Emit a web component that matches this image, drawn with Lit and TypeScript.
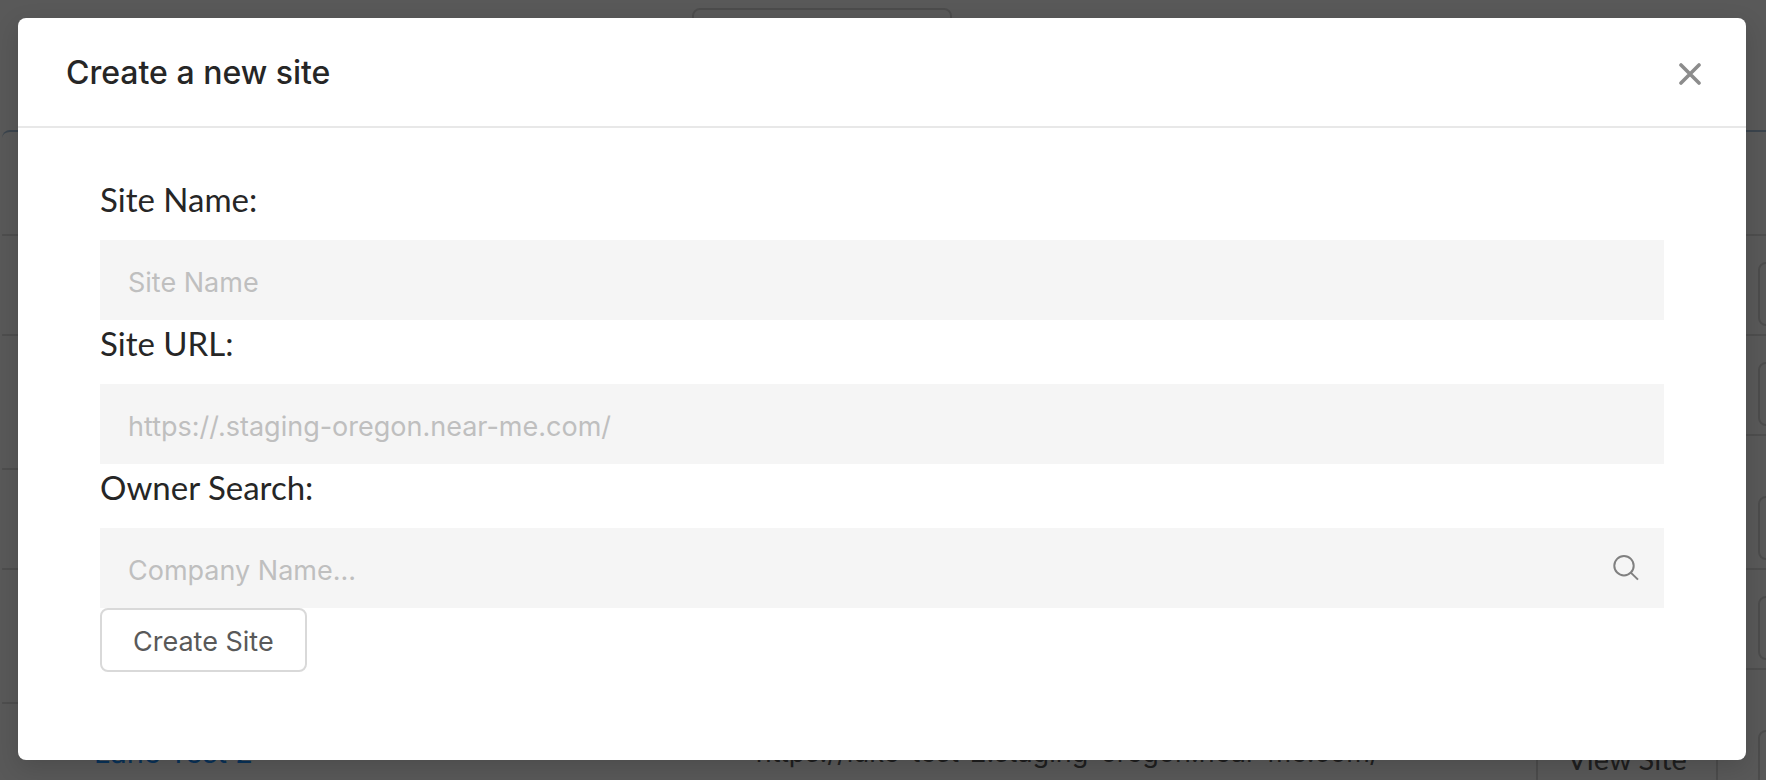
import { LitElement, html, css } from "lit";
import { customElement, state } from "lit/decorators.js";

@customElement("site-list")
class SiteList extends LitElement {
  static styles = css`
    :host {
      display: block;
      height: 100%;
      overflow: hidden;
      background: #ffffff;
      color: #595959;
      font: 27px/40px Inter, "Liberation Sans", sans-serif;
    }
    .toolbar {
      box-sizing: border-box;
      height: 130px;
      padding-top: 8px;
      display: flex;
      justify-content: center;
    }
    .filter {
      box-sizing: border-box;
      width: 260px;
      height: 64px;
      margin-right: 122px;
      border: 2px solid #d9d9d9;
      border-radius: 8px;
    }
    .tables {
      display: flex;
      margin-left: 2px;
      border-top: 2px solid #a8c4dc;
      border-top-left-radius: 8px;
    }
    .main {
      flex: 1;
      min-width: 0;
    }
    .row {
      box-sizing: border-box;
      height: 100px;
      border-bottom: 2px solid #e0e0e0;
      display: flex;
      align-items: center;
    }
    .tall {
      height: 134px;
    }
    .head {
      height: 104px;
    }
    .name {
      flex: 0 0 42%;
      box-sizing: border-box;
      padding-left: 92px;
      font-size: 29px;
    }
    .name a {
      color: #1890ff;
      text-decoration: none;
    }
    .url {
      flex: 1;
      padding-left: 28px;
    }
    .view {
      box-sizing: border-box;
      width: 182px;
      height: 100px;
      margin-right: 12px;
      padding-top: 12px;
      border: 2px solid #d9d9d9;
      border-width: 0 2px;
      background: none;
      color: #595959;
      font: 29px/40px Lato, "Liberation Sans", sans-serif;
    }
    .actions {
      flex: 0 0 36px;
      overflow: hidden;
    }
    .actions .row {
      align-items: flex-end;
      padding: 0 0 8px 28px;
    }
    .more {
      box-sizing: border-box;
      flex: 0 0 64px;
      height: 64px;
      border: 2px solid #d9d9d9;
      border-radius: 8px;
      background: none;
    }
  `;

  render() {
    return html`
      <div class="toolbar"><div class="filter"></div></div>
      <div class="tables">
        <div class="main">
          <div class="row head"></div>
          <div class="row"></div>
          <div class="row tall"></div>
          <div class="row"></div>
          <div class="row tall"></div>
          <div class="row">
            <div class="name"><a href="#">Lane Test 2</a></div>
            <div class="url">https://luke-test-2.staging-oregon.near-me.com/</div>
            <button class="view">View Site</button>
          </div>
        </div>
        <div class="actions">
          <div class="row head"></div>
          ${["", "", "tall", "", "tall"].map(
            (size) => html`<div class="row ${size}">
              <button class="more" aria-label="More"></button>
            </div>`
          )}
        </div>
      </div>
    `;
  }
}

@customElement("app-root")
class AppRoot extends LitElement {
  @state() private open = true;

  static styles = css`
    :host {
      display: block;
      position: relative;
      height: 100vh;
      overflow: hidden;
    }
    .mask {
      position: absolute;
      inset: 0;
      box-sizing: border-box;
      padding: 18px 20px 20px 18px;
      background: rgba(0, 0, 0, 0.65);
    }
    .modal {
      background: #ffffff;
      border-radius: 8px;
      box-shadow: 0 8px 24px rgba(0, 0, 0, 0.15);
      color: #262626;
    }
    .header {
      display: flex;
      align-items: center;
      justify-content: space-between;
      padding: 33px 44px 31px 48px;
      border-bottom: 2px solid #e8e8e8;
    }
    .title {
      margin: 0;
      font: 500 32px/44px Inter, "Liberation Sans", sans-serif;
    }
    .close {
      display: flex;
      padding: 0;
      border: 0;
      background: none;
      cursor: pointer;
    }
    .body {
      display: flex;
      flex-direction: column;
      align-items: stretch;
      padding: 48px 82px 88px;
    }
    .label {
      padding-bottom: 18px;
      font: 33px/46px Lato, "Liberation Sans", sans-serif;
    }
    .field {
      display: flex;
      align-items: center;
      height: 80px;
      background: #f5f5f5;
    }
    .input {
      flex: 1;
      min-width: 0;
      box-sizing: border-box;
      height: 100%;
      padding: 4px 28px 0;
      border: 0;
      outline: 0;
      background: none;
      color: #595959;
      font: 27px/40px Inter, "Liberation Sans", sans-serif;
    }
    .input::placeholder {
      color: #bfbfbf;
      opacity: 1;
    }
    .search {
      display: flex;
      padding: 0 24px 0 0;
      border: 0;
      background: none;
    }
    .submit {
      align-self: flex-start;
      box-sizing: border-box;
      height: 64px;
      padding: 4px 31px 0;
      border: 2px solid #d9d9d9;
      border-radius: 8px;
      background: #ffffff;
      color: #595959;
      font: 27px/40px Inter, "Liberation Sans", sans-serif;
      cursor: pointer;
    }
  `;

  private close() {
    this.open = false;
  }

  private renderModal() {
    return html`
      <div class="mask">
        <div class="modal" role="dialog" aria-labelledby="title">
          <div class="header">
            <h2 class="title" id="title">Create a new site</h2>
            <button class="close" aria-label="Close" @click=${this.close}>
              <svg width="24" height="24" viewBox="0 0 24 24" fill="none" stroke="#8c8c8c" stroke-width="3.6" stroke-linecap="round">
                <path d="M3 4L21 22M21 4L3 22" />
              </svg>
            </button>
          </div>
          <form class="body" @submit=${(e: Event) => e.preventDefault()}>
            <label class="label" for="name">Site Name:</label>
            <div class="field">
              <input class="input" id="name" type="text" placeholder="Site Name" />
            </div>
            <label class="label" for="url">Site URL:</label>
            <div class="field">
              <input class="input" id="url" type="text" placeholder="https://.staging-oregon.near-me.com/" />
            </div>
            <label class="label" for="owner">Owner Search:</label>
            <div class="field">
              <input class="input" id="owner" type="text" placeholder="Company Name..." />
              <button class="search" type="button" aria-label="Search">
                <svg width="28" height="28" viewBox="0 0 28 28" fill="none" stroke="#808080" stroke-width="2">
                  <circle cx="12" cy="11.7" r="9.7" />
                  <path d="M18.8 18.6L26 25.6" />
                </svg>
              </button>
            </div>
            <button class="submit" type="submit">Create Site</button>
          </form>
        </div>
      </div>
    `;
  }

  render() {
    return html`
      <site-list></site-list>
      ${this.open ? this.renderModal() : ""}
    `;
  }
}
